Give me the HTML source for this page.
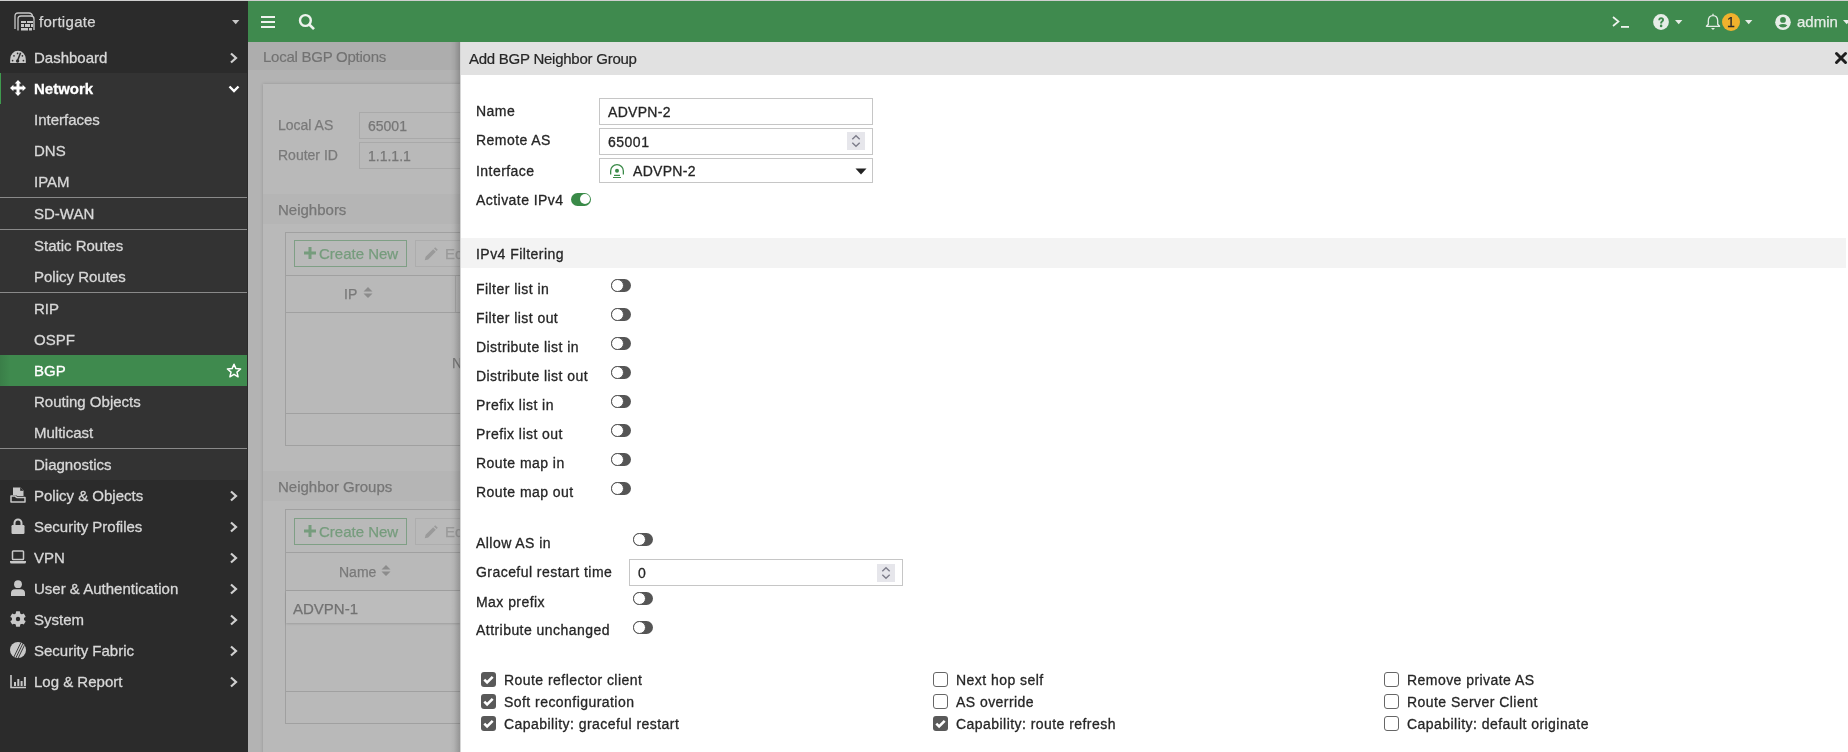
<!DOCTYPE html>
<html><head><meta charset="utf-8">
<style>
*{margin:0;padding:0;box-sizing:border-box}
html,body{width:1848px;height:752px;overflow:hidden;background:#b3b3b3;font-family:"Liberation Sans",sans-serif;position:relative}
.a{position:absolute}
.t{position:absolute;white-space:nowrap;line-height:1;-webkit-text-stroke:0.25px currentColor}
.nav{position:absolute;left:0;width:247px;height:31px}
.nav .lb{position:absolute;left:34px;top:0;line-height:31px;font-size:15px;color:#d8d8d8;white-space:nowrap;-webkit-text-stroke:0.3px currentColor}
.sep{position:absolute;left:0;width:247px;height:1px;background:#8a8a8a}
.ic{position:absolute;left:10px}
</style></head><body><div class="a" style="left:0;top:0;width:1848px;height:752px;will-change:transform;overflow:hidden">
<div class="a" style="left:0;top:0;width:248px;height:752px;background:#2b2b2b"></div>
<div class="a" style="left:248px;top:0;width:1600px;height:42px;background:#3f8a4e"></div>
<div class="a" style="left:0;top:0;width:1848px;height:1px;background:#cfcfcf"></div>
<div class="a" style="left:0;top:73px;width:247px;height:407px;background:#333"></div>
<div class="a" style="left:0;top:73px;width:1px;height:31px;background:#3f9a4e"></div>
<div class="sep" style="top:197px"></div>
<div class="sep" style="top:229px"></div>
<div class="sep" style="top:292px"></div>
<div class="sep" style="top:448px"></div>
<div class="a" style="left:0;top:355px;width:247px;height:31px;background:linear-gradient(90deg,#3a7e48 0px,#3f8a4e 10px,#3f8a4e 100%)"></div>
<svg class="a" style="left:13px;top:11px" width="23" height="22" viewBox="0 0 23 22"><g fill="none" stroke="#c8c8c8" stroke-width="1.3"><path d="M2 18 V5 Q2 2 5 2 H16 Q19 2 19.5 5"/><path d="M5 19.5 V8 Q5 5 8 5 H18 Q21 5 21 8 V19"/></g><g fill="#c8c8c8"><rect x="8" y="10" width="5" height="2"/><rect x="14" y="10" width="6" height="2"/><rect x="8" y="13" width="3" height="3"/><rect x="12" y="13" width="5" height="3"/><rect x="18" y="13" width="2" height="3"/><rect x="8" y="17" width="7" height="2.5"/><rect x="16" y="17" width="3" height="2.5"/></g></svg>
<svg class="ic" style="top:50px" width="16" height="14" viewBox="0 0 16 14"><path d="M0.2 13 Q0.1 11 0.2 9.2 A7.8 8.4 0 0 1 15.8 9.2 Q15.9 11 15.8 13 Z" fill="#c8c8c8"/><path d="M7.4 11 L10.6 2.8" stroke="#2b2b2b" stroke-width="1.5"/><circle cx="7.6" cy="11" r="1.7" fill="#2b2b2b"/><g fill="#2b2b2b"><circle cx="2.6" cy="10.6" r="0.85"/><circle cx="4" cy="5.8" r="0.85"/><circle cx="7.6" cy="3.4" r="0.85"/><circle cx="12.4" cy="5.8" r="0.85"/><circle cx="13.4" cy="10.6" r="0.85"/></g></svg>
<svg class="ic" style="top:80px" width="16" height="16" viewBox="0 0 16 16"><path d="M8 0 L11.3 3.4 H9.5 V6.5 H12.6 V4.7 L16 8 L12.6 11.3 V9.5 H9.5 V12.6 H11.3 L8 16 L4.7 12.6 H6.5 V9.5 H3.4 V11.3 L0 8 L3.4 4.7 V6.5 H6.5 V3.4 H4.7 Z" fill="#fff"/></svg>
<svg class="ic" style="top:487px" width="16" height="16" viewBox="0 0 16 16"><path d="M3 0.5 H10.5 L13.5 3.5 V8 H3 Z" fill="#c8c8c8"/><path d="M10.5 0.5 V3.5 H13.5" fill="#2b2b2b" stroke="#2b2b2b" stroke-width="0.6"/><path d="M1 9 H5.5 Q6 10.5 7 10.5 H15 V15 H1 Z" fill="none" stroke="#c8c8c8" stroke-width="1.5" stroke-linejoin="round"/><path d="M3 8 H6 Q6.5 9 7.5 9 H13.5 V8" fill="#c8c8c8"/></svg>
<svg class="ic" style="top:518px" width="16" height="16" viewBox="0 0 16 16"><path d="M4.5 7 V5 A3.5 3.5 0 0 1 11.5 5 V7" fill="none" stroke="#c8c8c8" stroke-width="2"/><rect x="1.5" y="7" width="13" height="9" rx="1.2" fill="#c8c8c8"/></svg>
<svg class="ic" style="top:549px" width="16" height="16" viewBox="0 0 16 16"><rect x="2.5" y="2" width="11" height="8.5" rx="0.8" fill="none" stroke="#c8c8c8" stroke-width="1.5"/><path d="M0 12 H16 V13 Q16 14.5 14.5 14.5 H1.5 Q0 14.5 0 13 Z" fill="#c8c8c8"/></svg>
<svg class="ic" style="top:580px" width="16" height="16" viewBox="0 0 16 16"><circle cx="8" cy="4.2" r="3.9" fill="#c8c8c8"/><path d="M1 16 V13 Q1 9.2 5 9.2 H11 Q15 9.2 15 13 V16 Z" fill="#c8c8c8"/></svg>
<svg class="ic" style="top:611px" width="16" height="16" viewBox="0 0 16 16"><g fill="#c8c8c8"><circle cx="8" cy="8" r="6.1"/><rect x="5.9" y="0.2" width="4.2" height="3.6" rx="0.7" transform="rotate(0 8 8)"/><rect x="5.9" y="0.2" width="4.2" height="3.6" rx="0.7" transform="rotate(60 8 8)"/><rect x="5.9" y="0.2" width="4.2" height="3.6" rx="0.7" transform="rotate(120 8 8)"/><rect x="5.9" y="0.2" width="4.2" height="3.6" rx="0.7" transform="rotate(180 8 8)"/><rect x="5.9" y="0.2" width="4.2" height="3.6" rx="0.7" transform="rotate(240 8 8)"/><rect x="5.9" y="0.2" width="4.2" height="3.6" rx="0.7" transform="rotate(300 8 8)"/></g><circle cx="8" cy="8" r="2.2" fill="#2b2b2b"/></svg>
<svg class="ic" style="top:642px" width="16" height="16" viewBox="0 0 16 16"><defs><clipPath id="cp"><circle cx="8" cy="8" r="8"/></clipPath></defs><circle cx="8" cy="8" r="8" fill="#c8c8c8"/><g clip-path="url(#cp)" stroke="#2b2b2b" stroke-width="0.9"><path d="M11.2 0 L3.4 16"/><path d="M13.6 0 L5.8 16"/><path d="M16 0 L8.2 16"/></g></svg>
<svg class="ic" style="top:673px" width="16" height="16" viewBox="0 0 16 16"><path d="M1 2 V14.5 H16" fill="none" stroke="#c8c8c8" stroke-width="1.6"/><g fill="#c8c8c8"><rect x="4" y="9" width="2" height="4"/><rect x="7.3" y="6" width="2" height="7"/><rect x="10.6" y="8" width="2" height="5"/><rect x="13.9" y="4" width="2" height="9"/></g></svg>
<svg class="a" style="left:232px;top:20px" width="8" height="5" viewBox="0 0 8 5"><path d="M0 0 H7.4 L3.7 4.3 Z" fill="#c8c8c8"/></svg>
<div class="t" style="left:39px;top:14px;font-size:15px;color:#d6d6d6;letter-spacing:0.3px">fortigate</div>
<div class="nav" style="top:42px"><div class="lb">Dashboard</div><svg class="a" style="left:229px;top:10px" width="10" height="12" viewBox="0 0 10 12"><path d="M2 1.5 L7 6 L2 10.5" fill="none" stroke="#d0d0d0" stroke-width="2.2"/></svg></div>
<div class="nav" style="top:73px"><div class="lb" style="color:#fff;font-weight:bold">Network</div><svg class="a" style="left:228px;top:12px" width="12" height="9" viewBox="0 0 12 9"><path d="M1.5 1.5 L6 6 L10.5 1.5" fill="none" stroke="#fff" stroke-width="2.4"/></svg></div>
<div class="nav" style="top:104px"><div class="lb">Interfaces</div></div>
<div class="nav" style="top:135px"><div class="lb">DNS</div></div>
<div class="nav" style="top:166px"><div class="lb">IPAM</div></div>
<div class="nav" style="top:198px"><div class="lb">SD-WAN</div></div>
<div class="nav" style="top:230px"><div class="lb">Static Routes</div></div>
<div class="nav" style="top:261px"><div class="lb">Policy Routes</div></div>
<div class="nav" style="top:293px"><div class="lb">RIP</div></div>
<div class="nav" style="top:324px"><div class="lb">OSPF</div></div>
<div class="nav" style="top:355px"><div class="lb" style="color:#fff">BGP</div><svg class="a" style="left:225px;top:7px" width="18" height="18" viewBox="0 0 18 18"><path d="M9 2.2 L10.9 6.6 L15.6 7 L12 10.1 L13.1 14.8 L9 12.3 L4.9 14.8 L6 10.1 L2.4 7 L7.1 6.6 Z" fill="none" stroke="#fff" stroke-width="1.5" stroke-linejoin="round"/></svg></div>
<div class="nav" style="top:386px"><div class="lb">Routing Objects</div></div>
<div class="nav" style="top:417px"><div class="lb">Multicast</div></div>
<div class="nav" style="top:449px"><div class="lb">Diagnostics</div></div>
<div class="nav" style="top:480px"><div class="lb">Policy &amp; Objects</div><svg class="a" style="left:229px;top:10px" width="10" height="12" viewBox="0 0 10 12"><path d="M2 1.5 L7 6 L2 10.5" fill="none" stroke="#d0d0d0" stroke-width="2.2"/></svg></div>
<div class="nav" style="top:511px"><div class="lb">Security Profiles</div><svg class="a" style="left:229px;top:10px" width="10" height="12" viewBox="0 0 10 12"><path d="M2 1.5 L7 6 L2 10.5" fill="none" stroke="#d0d0d0" stroke-width="2.2"/></svg></div>
<div class="nav" style="top:542px"><div class="lb">VPN</div><svg class="a" style="left:229px;top:10px" width="10" height="12" viewBox="0 0 10 12"><path d="M2 1.5 L7 6 L2 10.5" fill="none" stroke="#d0d0d0" stroke-width="2.2"/></svg></div>
<div class="nav" style="top:573px"><div class="lb">User &amp; Authentication</div><svg class="a" style="left:229px;top:10px" width="10" height="12" viewBox="0 0 10 12"><path d="M2 1.5 L7 6 L2 10.5" fill="none" stroke="#d0d0d0" stroke-width="2.2"/></svg></div>
<div class="nav" style="top:604px"><div class="lb">System</div><svg class="a" style="left:229px;top:10px" width="10" height="12" viewBox="0 0 10 12"><path d="M2 1.5 L7 6 L2 10.5" fill="none" stroke="#d0d0d0" stroke-width="2.2"/></svg></div>
<div class="nav" style="top:635px"><div class="lb">Security Fabric</div><svg class="a" style="left:229px;top:10px" width="10" height="12" viewBox="0 0 10 12"><path d="M2 1.5 L7 6 L2 10.5" fill="none" stroke="#d0d0d0" stroke-width="2.2"/></svg></div>
<div class="nav" style="top:666px"><div class="lb">Log &amp; Report</div><svg class="a" style="left:229px;top:10px" width="10" height="12" viewBox="0 0 10 12"><path d="M2 1.5 L7 6 L2 10.5" fill="none" stroke="#d0d0d0" stroke-width="2.2"/></svg></div><div class="a" style="left:261px;top:16px;width:14px;height:2px;background:#eef3ee"></div>
<div class="a" style="left:261px;top:21px;width:14px;height:2px;background:#eef3ee"></div>
<div class="a" style="left:261px;top:26px;width:14px;height:2px;background:#eef3ee"></div>
<svg class="a" style="left:297px;top:12px" width="20" height="20" viewBox="0 0 20 20"><circle cx="8.4" cy="8.5" r="5.4" fill="none" stroke="#eef3ee" stroke-width="2.4"/><path d="M12.3 12.5 L17 17.2" stroke="#eef3ee" stroke-width="2.6"/></svg>
<svg class="a" style="left:1611px;top:15px" width="20" height="14" viewBox="0 0 20 14"><path d="M2 2 L7.5 6.5 L2 11" fill="none" stroke="#eef3ee" stroke-width="1.7"/><rect x="10" y="11" width="8" height="1.8" fill="#eef3ee"/></svg>
<svg class="a" style="left:1653px;top:14px" width="16" height="16" viewBox="0 0 16 16"><circle cx="8" cy="8" r="7.9" fill="#e6ede7"/><path d="M5.3 6.3 Q5.3 3.2 8.2 3.2 Q11 3.2 11 5.9 Q11 7.3 9.6 8.1 Q9.2 8.4 9.2 9.6 H7.1 Q7.1 7.9 8.2 7.1 Q9 6.5 9 6 Q9 5.1 8.1 5.1 Q7.2 5.1 7.2 6.3 Z" fill="#3f8a4e"/><circle cx="8.1" cy="11.9" r="1.3" fill="#3f8a4e"/></svg>
<svg class="a" style="left:1675px;top:20px" width="8" height="5" viewBox="0 0 8 5"><path d="M0 0 H7.4 L3.7 4.3 Z" fill="#e6ede7"/></svg>
<svg class="a" style="left:1705px;top:13px" width="16" height="18" viewBox="0 0 16 18"><path d="M8 0.8 V2.6 M3.3 11.2 V8 Q3.3 2.6 8 2.6 Q12.7 2.6 12.7 8 V11.2 L14.6 13.3 H1.4 Z" fill="none" stroke="#e6ede7" stroke-width="1.3" stroke-linejoin="round"/><path d="M6 15 H10 L8 17 Z" fill="#e6ede7"/></svg>
<div class="a" style="left:1722px;top:13px;width:18px;height:18px;border-radius:50%;background:#f0b22d"></div>
<div class="t" style="left:1726px;top:15px;font-size:14px;color:#2a2a2a;width:10px;text-align:center">1</div>
<svg class="a" style="left:1745px;top:20px" width="8" height="5" viewBox="0 0 8 5"><path d="M0 0 H7.4 L3.7 4.3 Z" fill="#e6ede7"/></svg>
<svg class="a" style="left:1775px;top:14px" width="16" height="16" viewBox="0 0 16 16"><circle cx="8" cy="8.2" r="7.8" fill="#e6ede7"/><circle cx="8" cy="5.9" r="2.9" fill="#3f8a4e"/><path d="M3.6 11.2 Q8 8.6 12.4 11.2 Q10.8 13.6 8 13.6 Q5.2 13.6 3.6 11.2 Z" fill="#3f8a4e"/></svg>
<div class="t" style="left:1797px;top:14px;font-size:15px;color:#e6ede7">admin</div>
<svg class="a" style="left:1843px;top:20px" width="8" height="5" viewBox="0 0 8 5"><path d="M0 0 H7.4 L3.7 4.3 Z" fill="#e6ede7"/></svg>
<div class="a" style="left:248px;top:42px;width:212px;height:28px;background:#adadad"></div>
<div class="t" style="left:263px;top:49px;font-size:15px;color:#727272;letter-spacing:-0.25px;-webkit-text-stroke:0.15px currentColor">Local BGP Options</div>
<div class="a" style="left:263px;top:84px;width:260px;height:700px;background:#b9b9b9;box-shadow:0 0 3px rgba(0,0,0,0.18)"></div>
<div class="t" style="left:278px;top:118px;font-size:14px;color:#7a7a7a">Local AS</div>
<div class="t" style="left:278px;top:148px;font-size:14px;color:#7a7a7a">Router ID</div>
<div class="a" style="left:359px;top:112px;width:110px;height:27px;border:1px solid #a9a9a9"></div>
<div class="a" style="left:359px;top:142px;width:110px;height:27px;border:1px solid #a9a9a9"></div>
<div class="t" style="left:368px;top:119px;font-size:14px;color:#777">65001</div>
<div class="t" style="left:368px;top:149px;font-size:14px;color:#777">1.1.1.1</div>
<div class="a" style="left:263px;top:194px;width:197px;height:30px;background:#b5b5b5"></div>
<div class="t" style="left:278px;top:202px;font-size:15px;color:#767676">Neighbors</div>
<div class="a" style="left:285px;top:232px;width:200px;height:214px;border:1px solid #a0a0a0"></div>
<div class="a" style="left:294px;top:240px;width:113px;height:27px;border:1px solid #7f9f85"></div>
<div class="t" style="left:319px;top:246px;font-size:15px;color:#769c7d">Create New</div>
<svg class="a" style="left:303px;top:246px" width="14" height="14" viewBox="0 0 14 14"><path d="M7 1 V13 M1 7 H13" stroke="#769c7d" stroke-width="3"/></svg>
<div class="a" style="left:415px;top:240px;width:60px;height:27px;border:1px solid #adadad"></div>
<svg class="a" style="left:424px;top:247px" width="14" height="14" viewBox="0 0 14 14"><path d="M0.8 13.2 L1.6 9.8 L9.2 2.2 L11.8 4.8 L4.2 12.4 Z M10 1.4 L11.2 0.2 L13.8 2.8 L12.6 4 Z" fill="#9a9a9a"/></svg>
<div class="t" style="left:445px;top:246px;font-size:15px;color:#9a9a9a">Ed</div>
<div class="a" style="left:286px;top:275px;width:174px;height:1px;background:#a0a0a0"></div>
<div class="a" style="left:286px;top:312px;width:174px;height:1px;background:#a0a0a0"></div>
<div class="a" style="left:455px;top:276px;width:1px;height:36px;background:#a5a5a5"></div>
<div class="t" style="left:344px;top:287px;font-size:14px;color:#7a7a7a">IP</div>
<svg class="a" style="left:363px;top:286px" width="10" height="14" viewBox="0 0 10 14"><path d="M0.5 5.6 L5 1 L9.5 5.6 Z M0.5 7.4 L5 12 L9.5 7.4 Z" fill="#8c8c8c"/></svg>
<div class="t" style="left:452px;top:356px;font-size:14px;color:#7a7a7a">N</div>
<div class="a" style="left:286px;top:413px;width:174px;height:1px;background:#a0a0a0"></div>
<div class="a" style="left:263px;top:471px;width:197px;height:30px;background:#b5b5b5"></div>
<div class="t" style="left:278px;top:479px;font-size:15px;color:#767676">Neighbor Groups</div>
<div class="a" style="left:285px;top:509px;width:200px;height:215px;border:1px solid #a0a0a0"></div>
<div class="a" style="left:294px;top:518px;width:113px;height:27px;border:1px solid #7f9f85"></div>
<div class="t" style="left:319px;top:524px;font-size:15px;color:#769c7d">Create New</div>
<svg class="a" style="left:303px;top:524px" width="14" height="14" viewBox="0 0 14 14"><path d="M7 1 V13 M1 7 H13" stroke="#769c7d" stroke-width="3"/></svg>
<div class="a" style="left:415px;top:518px;width:60px;height:27px;border:1px solid #adadad"></div>
<svg class="a" style="left:424px;top:525px" width="14" height="14" viewBox="0 0 14 14"><path d="M0.8 13.2 L1.6 9.8 L9.2 2.2 L11.8 4.8 L4.2 12.4 Z M10 1.4 L11.2 0.2 L13.8 2.8 L12.6 4 Z" fill="#9a9a9a"/></svg>
<div class="t" style="left:445px;top:524px;font-size:15px;color:#9a9a9a">Ed</div>
<div class="a" style="left:286px;top:552px;width:174px;height:1px;background:#a0a0a0"></div>
<div class="a" style="left:286px;top:590px;width:174px;height:1px;background:#a0a0a0"></div>
<div class="t" style="left:339px;top:565px;font-size:14px;color:#7a7a7a">Name</div>
<svg class="a" style="left:381px;top:564px" width="10" height="14" viewBox="0 0 10 14"><path d="M0.5 5.6 L5 1 L9.5 5.6 Z M0.5 7.4 L5 12 L9.5 7.4 Z" fill="#8c8c8c"/></svg>
<div class="a" style="left:286px;top:591px;width:174px;height:32px;background:#bcbcbc;box-shadow:0 1px 2px rgba(0,0,0,0.15)"></div>
<div class="t" style="left:293px;top:601px;font-size:15px;color:#727272">ADVPN-1</div>
<div class="a" style="left:286px;top:691px;width:174px;height:1px;background:#a0a0a0"></div>

<div class="a" style="left:450px;top:42px;width:10px;height:710px;background:linear-gradient(90deg,rgba(0,0,0,0),rgba(0,0,0,0.04) 40%,rgba(0,0,0,0.2))"></div>
<div class="a" style="left:460px;top:42px;width:1388px;height:710px;background:#fff;border-left:1px solid #d6d6d6"></div>
<div class="a" style="left:461px;top:42px;width:1387px;height:33px;background:#e1e1e1"></div>
<div class="t" style="left:469px;top:51px;font-size:15px;color:#262626;letter-spacing:-0.25px;-webkit-text-stroke:0.2px currentColor">Add BGP Neighbor Group</div>
<svg class="a" style="left:1834px;top:51px" width="14" height="14" viewBox="0 0 14 14"><path d="M2.5 2.5 L11.5 11.5 M11.5 2.5 L2.5 11.5" stroke="#1e1e1e" stroke-width="3" stroke-linecap="round"/></svg>
<div class="t" style="left:476px;top:104px;font-size:14px;color:#262626;letter-spacing:0.45px;-webkit-text-stroke:0.3px currentColor;">Name</div>
<div class="t" style="left:476px;top:133px;font-size:14px;color:#262626;letter-spacing:0.45px;-webkit-text-stroke:0.3px currentColor;">Remote AS</div>
<div class="t" style="left:476px;top:164px;font-size:14px;color:#262626;letter-spacing:0.45px;-webkit-text-stroke:0.3px currentColor;">Interface</div>
<div class="t" style="left:476px;top:193px;font-size:14px;color:#262626;letter-spacing:0.45px;-webkit-text-stroke:0.3px currentColor;">Activate IPv4</div>
<div class="a" style="left:599px;top:98px;width:274px;height:27px;border:1px solid #c6c6c6"></div>
<div class="t" style="left:608px;top:105px;font-size:14px;color:#262626;letter-spacing:0.3px;-webkit-text-stroke:0.3px currentColor;">ADVPN-2</div>
<div class="a" style="left:599px;top:128px;width:274px;height:27px;border:1px solid #c6c6c6"></div>
<div class="t" style="left:608px;top:135px;font-size:14px;color:#262626;letter-spacing:0.5px;-webkit-text-stroke:0.3px currentColor;">65001</div>
<div class="a" style="left:847px;top:132px;width:18px;height:18px;background:#e6e6eb"></div>
<svg class="a" style="left:847px;top:132px" width="18" height="18" viewBox="0 0 18 18"><path d="M5.3 7.2 L9 3.7 L12.7 7.2 M5.3 10.8 L9 14.3 L12.7 10.8" fill="none" stroke="#7d7d8a" stroke-width="1.4"/></svg>
<div class="a" style="left:599px;top:158px;width:274px;height:25px;border:1px solid #c6c6c6"></div>
<svg class="a" style="left:609px;top:163px" width="16" height="16" viewBox="0 0 16 16"><path d="M1.65 11.6 V8 A6.35 6.35 0 0 1 14.35 8 V11.6" fill="none" stroke="#3a8a48" stroke-width="1.3"/><circle cx="8" cy="7.8" r="2" fill="#3a8a48"/><path d="M5 12.4 H11 M4 14.5 H12" stroke="#3a8a48" stroke-width="1.1"/></svg>
<div class="t" style="left:633px;top:164px;font-size:14px;color:#262626;letter-spacing:0.3px;-webkit-text-stroke:0.3px currentColor;">ADVPN-2</div>
<svg class="a" style="left:855px;top:168px" width="12" height="7" viewBox="0 0 12 7"><path d="M0.5 0.5 H11.5 L6 6.5 Z" fill="#222"/></svg>
<div class="a" style="left:571px;top:193px;width:20px;height:13px;border-radius:7px;background:#3a8a48"></div>
<div class="a" style="left:580px;top:194px;width:10px;height:10px;border-radius:50%;background:#fff"></div>
<div class="a" style="left:461px;top:238px;width:1385px;height:30px;background:#f3f3f3"></div>
<div class="t" style="left:476px;top:247px;font-size:14px;color:#262626;letter-spacing:0.45px;-webkit-text-stroke:0.3px currentColor;">IPv4 Filtering</div>
<div class="t" style="left:476px;top:282px;font-size:14px;color:#262626;letter-spacing:0.45px;-webkit-text-stroke:0.3px currentColor;">Filter list in</div>
<div class="a" style="left:611px;top:279px;width:20px;height:13px;border-radius:7px;background:#555"></div>
<div class="a" style="left:611px;top:279px;width:13px;height:13px;border-radius:50%;background:#fff;border:1.5px solid #555"></div>
<div class="t" style="left:476px;top:311px;font-size:14px;color:#262626;letter-spacing:0.45px;-webkit-text-stroke:0.3px currentColor;">Filter list out</div>
<div class="a" style="left:611px;top:308px;width:20px;height:13px;border-radius:7px;background:#555"></div>
<div class="a" style="left:611px;top:308px;width:13px;height:13px;border-radius:50%;background:#fff;border:1.5px solid #555"></div>
<div class="t" style="left:476px;top:340px;font-size:14px;color:#262626;letter-spacing:0.45px;-webkit-text-stroke:0.3px currentColor;">Distribute list in</div>
<div class="a" style="left:611px;top:337px;width:20px;height:13px;border-radius:7px;background:#555"></div>
<div class="a" style="left:611px;top:337px;width:13px;height:13px;border-radius:50%;background:#fff;border:1.5px solid #555"></div>
<div class="t" style="left:476px;top:369px;font-size:14px;color:#262626;letter-spacing:0.45px;-webkit-text-stroke:0.3px currentColor;">Distribute list out</div>
<div class="a" style="left:611px;top:366px;width:20px;height:13px;border-radius:7px;background:#555"></div>
<div class="a" style="left:611px;top:366px;width:13px;height:13px;border-radius:50%;background:#fff;border:1.5px solid #555"></div>
<div class="t" style="left:476px;top:398px;font-size:14px;color:#262626;letter-spacing:0.45px;-webkit-text-stroke:0.3px currentColor;">Prefix list in</div>
<div class="a" style="left:611px;top:395px;width:20px;height:13px;border-radius:7px;background:#555"></div>
<div class="a" style="left:611px;top:395px;width:13px;height:13px;border-radius:50%;background:#fff;border:1.5px solid #555"></div>
<div class="t" style="left:476px;top:427px;font-size:14px;color:#262626;letter-spacing:0.45px;-webkit-text-stroke:0.3px currentColor;">Prefix list out</div>
<div class="a" style="left:611px;top:424px;width:20px;height:13px;border-radius:7px;background:#555"></div>
<div class="a" style="left:611px;top:424px;width:13px;height:13px;border-radius:50%;background:#fff;border:1.5px solid #555"></div>
<div class="t" style="left:476px;top:456px;font-size:14px;color:#262626;letter-spacing:0.45px;-webkit-text-stroke:0.3px currentColor;">Route map in</div>
<div class="a" style="left:611px;top:453px;width:20px;height:13px;border-radius:7px;background:#555"></div>
<div class="a" style="left:611px;top:453px;width:13px;height:13px;border-radius:50%;background:#fff;border:1.5px solid #555"></div>
<div class="t" style="left:476px;top:485px;font-size:14px;color:#262626;letter-spacing:0.45px;-webkit-text-stroke:0.3px currentColor;">Route map out</div>
<div class="a" style="left:611px;top:482px;width:20px;height:13px;border-radius:7px;background:#555"></div>
<div class="a" style="left:611px;top:482px;width:13px;height:13px;border-radius:50%;background:#fff;border:1.5px solid #555"></div>
<div class="t" style="left:476px;top:536px;font-size:14px;color:#262626;letter-spacing:0.45px;-webkit-text-stroke:0.3px currentColor;">Allow AS in</div>
<div class="a" style="left:633px;top:533px;width:20px;height:13px;border-radius:7px;background:#555"></div>
<div class="a" style="left:633px;top:533px;width:13px;height:13px;border-radius:50%;background:#fff;border:1.5px solid #555"></div>
<div class="t" style="left:476px;top:565px;font-size:14px;color:#262626;letter-spacing:0.45px;-webkit-text-stroke:0.3px currentColor;">Graceful restart time</div>
<div class="a" style="left:629px;top:559px;width:274px;height:27px;border:1px solid #c6c6c6"></div>
<div class="t" style="left:638px;top:566px;font-size:14px;color:#262626;letter-spacing:0.45px;-webkit-text-stroke:0.3px currentColor;">0</div>
<div class="a" style="left:877px;top:564px;width:18px;height:18px;background:#e6e6eb"></div>
<svg class="a" style="left:877px;top:564px" width="18" height="18" viewBox="0 0 18 18"><path d="M5.3 7.2 L9 3.7 L12.7 7.2 M5.3 10.8 L9 14.3 L12.7 10.8" fill="none" stroke="#7d7d8a" stroke-width="1.4"/></svg>
<div class="t" style="left:476px;top:595px;font-size:14px;color:#262626;letter-spacing:0.45px;-webkit-text-stroke:0.3px currentColor;">Max prefix</div>
<div class="a" style="left:633px;top:592px;width:20px;height:13px;border-radius:7px;background:#555"></div>
<div class="a" style="left:633px;top:592px;width:13px;height:13px;border-radius:50%;background:#fff;border:1.5px solid #555"></div>
<div class="t" style="left:476px;top:623px;font-size:14px;color:#262626;letter-spacing:0.45px;-webkit-text-stroke:0.3px currentColor;">Attribute unchanged</div>
<div class="a" style="left:633px;top:621px;width:20px;height:13px;border-radius:7px;background:#555"></div>
<div class="a" style="left:633px;top:621px;width:13px;height:13px;border-radius:50%;background:#fff;border:1.5px solid #555"></div>
<div class="a" style="left:481px;top:672px;width:15px;height:15px;border-radius:3px;background:#595959"></div>
<svg class="a" style="left:481px;top:672px" width="15" height="15" viewBox="0 0 15 15"><path d="M3.3 7.6 L6.1 10.4 L11.7 4.8" fill="none" stroke="#fff" stroke-width="2.6"/></svg>
<div class="t" style="left:504px;top:673px;font-size:14px;color:#262626;letter-spacing:0.45px;-webkit-text-stroke:0.3px currentColor;">Route reflector client</div>
<div class="a" style="left:481px;top:694px;width:15px;height:15px;border-radius:3px;background:#595959"></div>
<svg class="a" style="left:481px;top:694px" width="15" height="15" viewBox="0 0 15 15"><path d="M3.3 7.6 L6.1 10.4 L11.7 4.8" fill="none" stroke="#fff" stroke-width="2.6"/></svg>
<div class="t" style="left:504px;top:695px;font-size:14px;color:#262626;letter-spacing:0.45px;-webkit-text-stroke:0.3px currentColor;">Soft reconfiguration</div>
<div class="a" style="left:481px;top:716px;width:15px;height:15px;border-radius:3px;background:#595959"></div>
<svg class="a" style="left:481px;top:716px" width="15" height="15" viewBox="0 0 15 15"><path d="M3.3 7.6 L6.1 10.4 L11.7 4.8" fill="none" stroke="#fff" stroke-width="2.6"/></svg>
<div class="t" style="left:504px;top:717px;font-size:14px;color:#262626;letter-spacing:0.45px;-webkit-text-stroke:0.3px currentColor;">Capability: graceful restart</div>
<div class="a" style="left:933px;top:672px;width:15px;height:15px;border-radius:3px;border:1.5px solid #666;background:#fff"></div>
<div class="t" style="left:956px;top:673px;font-size:14px;color:#262626;letter-spacing:0.45px;-webkit-text-stroke:0.3px currentColor;">Next hop self</div>
<div class="a" style="left:933px;top:694px;width:15px;height:15px;border-radius:3px;border:1.5px solid #666;background:#fff"></div>
<div class="t" style="left:956px;top:695px;font-size:14px;color:#262626;letter-spacing:0.45px;-webkit-text-stroke:0.3px currentColor;">AS override</div>
<div class="a" style="left:933px;top:716px;width:15px;height:15px;border-radius:3px;background:#595959"></div>
<svg class="a" style="left:933px;top:716px" width="15" height="15" viewBox="0 0 15 15"><path d="M3.3 7.6 L6.1 10.4 L11.7 4.8" fill="none" stroke="#fff" stroke-width="2.6"/></svg>
<div class="t" style="left:956px;top:717px;font-size:14px;color:#262626;letter-spacing:0.45px;-webkit-text-stroke:0.3px currentColor;">Capability: route refresh</div>
<div class="a" style="left:1384px;top:672px;width:15px;height:15px;border-radius:3px;border:1.5px solid #666;background:#fff"></div>
<div class="t" style="left:1407px;top:673px;font-size:14px;color:#262626;letter-spacing:0.45px;-webkit-text-stroke:0.3px currentColor;">Remove private AS</div>
<div class="a" style="left:1384px;top:694px;width:15px;height:15px;border-radius:3px;border:1.5px solid #666;background:#fff"></div>
<div class="t" style="left:1407px;top:695px;font-size:14px;color:#262626;letter-spacing:0.45px;-webkit-text-stroke:0.3px currentColor;">Route Server Client</div>
<div class="a" style="left:1384px;top:716px;width:15px;height:15px;border-radius:3px;border:1.5px solid #666;background:#fff"></div>
<div class="t" style="left:1407px;top:717px;font-size:14px;color:#262626;letter-spacing:0.45px;-webkit-text-stroke:0.3px currentColor;">Capability: default originate</div></div></body></html>
